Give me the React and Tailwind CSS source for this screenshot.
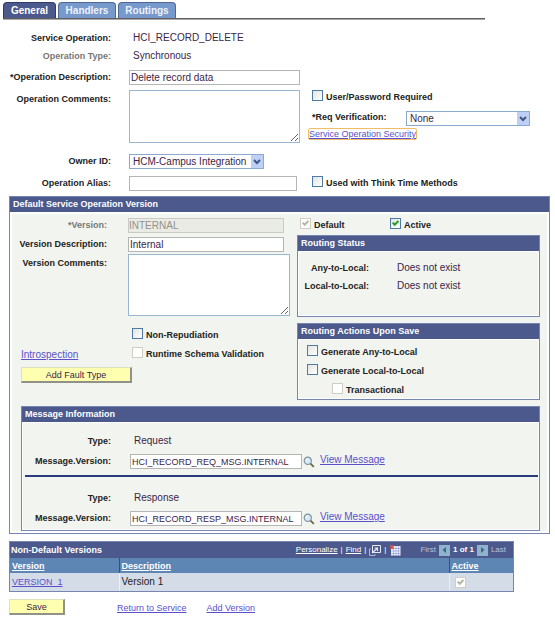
import React from "react";

const tabs = ["General", "Handlers", "Routings"];

const inputClass =
  "block h-[15px] w-full border border-[#b5b5b5] bg-white pl-px text-[#3b2447] outline-none";
const areaClass = "block w-full resize-y border border-[#9ab6d3] bg-white outline-none";
const linkClass = "text-[#5a50cc] underline";
const labelClass = "text-right text-[9px] font-bold whitespace-nowrap";
const buttonClass =
  "block h-4 border border-t-[#e0dfc0] border-r-2 border-b-2 border-l-[#e0dfc0] border-r-[#929187] border-b-[#929187] bg-[#ffffb0] text-[9px] leading-3 text-[#3b2447]";

const Checkbox = ({ label, checked = false, disabled = false, bare = false }) => (
  <label className="flex items-start gap-[3px] text-[9px] leading-3 font-bold">
    <span className="relative block h-[11px] w-[11px] shrink-0">
      <input
        type="checkbox"
        defaultChecked={checked}
        disabled={disabled}
        aria-label={bare ? label : undefined}
        className="peer block h-[11px] w-[11px] appearance-none border border-[#4d7ba6] bg-linear-to-br from-[#e4e4e0] to-white disabled:border-[#d0cec4] disabled:from-white"
      />
      <svg
        viewBox="0 0 11 11"
        className="pointer-events-none absolute inset-0 hidden text-[#21a121] peer-checked:block peer-disabled:text-[#b5b5a8]"
      >
        <path d="M2.7 4.6 L4.7 6.7 L8.4 3" fill="none" stroke="currentColor" strokeWidth="2" />
      </svg>
    </span>
    {!bare && <span className="pt-px">{label}</span>}
  </label>
);

const Select = ({ id, value }) => (
  <div className="relative">
    <select
      id={id}
      defaultValue={value}
      className="block h-[15px] w-full appearance-none border border-[#8aabcf] bg-white pl-[3px] text-[#3b2447] outline-none"
    >
      <option>{value}</option>
    </select>
    <span className="pointer-events-none absolute top-px right-px flex h-[13px] w-3 items-center justify-center bg-[#bfd0f7]">
      <svg viewBox="0 0 8 6" className="h-[6px] w-2">
        <path d="M1 1 L4 4 L7 1" fill="none" stroke="#3f5584" strokeWidth="2" />
      </svg>
    </span>
  </div>
);

const Panel = ({ title, className = "", children }) => (
  <section className={`border border-[#7785b3] bg-[#f2f4ef] ${className}`}>
    <h2 className="h-[15px] bg-[#4b598c] pl-[3px] text-[9px] leading-[15px] font-bold text-white">
      {title}
    </h2>
    <div className="border border-white">{children}</div>
  </section>
);

const SearchIcon = () => (
  <svg viewBox="0 0 12 12" className="h-3 w-3">
    <circle cx="4.8" cy="4.8" r="3.6" fill="#d5ecf8" stroke="#8293a0" strokeWidth="1.2" />
    <path d="M3 4.6 A2 2 0 0 1 5 2.8" fill="none" stroke="#fff" />
    <path d="M7.6 7.6 L10.8 10.8" stroke="#6d6341" strokeWidth="1.8" />
  </svg>
);

const MessageRow = ({ id, type, value, className }) => (
  <div className={`grid grid-cols-[88px_172px_1fr] gap-x-[19px] ${className}`}>
    <span className={`${labelClass} leading-[18px]`}>Type:</span>
    <span className="pl-1 leading-[18px] text-[#3b2447]">{type}</span>
    <span />
    <label htmlFor={id} className={`${labelClass} pt-1 leading-[15px]`}>
      Message.Version:
    </label>
    <div className="pt-1">
      <input id={id} defaultValue={value} className={`${inputClass} text-[9px]`} />
    </div>
    <div className="-ml-[18px] flex items-start gap-[5px] pt-1">
      <button type="button" aria-label={`Look up ${type}`} className="pt-[2px]">
        <SearchIcon />
      </button>
      <a href="#" className={linkClass}>
        View Message
      </a>
    </div>
  </div>
);

const PopOutIcon = () => (
  <svg viewBox="0 0 12 11" className="h-[11px] w-3">
    <path d="M3.5 .5 H11.5 V7.5 H3.5 Z" fill="#4b598c" stroke="#e5e9f4" />
    <path d="M2 4 H.5 V10.5 H6 V9" fill="none" stroke="#aeb8d4" />
    <path d="M3 8 L8 3.5 M5.5 3 H8.5 V6" fill="none" stroke="#e5e9f4" strokeWidth="1.2" />
  </svg>
);

const GridIcon = () => (
  <svg viewBox="0 0 12 11" className="h-[11px] w-3">
    <rect x="2" y="1" width="9.5" height="9.5" fill="#f4f5ff" />
    <path d="M2 3.5 H11.5 M2 6 H11.5 M2 8.5 H11.5 M4.5 1 V10.5 M7 1 V10.5 M9.5 1 V10.5" stroke="#8791d6" strokeWidth=".6" />
    <path d="M0 0 L2 .6 L4.6 0 L4.6 4 L.8 4 L2 2.6 Z" fill="#dc5940" />
  </svg>
);

const PageArrow = ({ label, d }) => (
  <button type="button" aria-label={label} className="h-[11px] w-[11px] bg-[#8fb3cd]">
    <svg viewBox="0 0 11 11">
      <path d={d} fill="#3f6589" />
    </svg>
  </button>
);

const App = () => {
  return (
    <div className="min-h-screen bg-white pt-[2px] font-['Liberation_Sans',Arial,sans-serif] text-[10px] leading-3 text-[#222222]">
      <nav className="mx-[3px] flex max-w-[482px] gap-[2px] border-b border-[#5f5f5f] shadow-[0_1px_0_#a8a8a8]">
        {tabs.map((tab, i) => (
          <button
            key={tab}
            type="button"
            className={`h-4 rounded-t-[4px] border border-b-0 text-[10px] leading-[15px] font-bold ${
              i === 0
                ? "w-[53px] border-[#303b6b] bg-[#4b598c] text-white"
                : "w-[58px] border-[#4c6798] bg-[#7799cb] text-[#eef3fb]"
            }`}
          >
            {tab}
          </button>
        ))}
      </nav>

      <form className="mr-[5px] ml-[9px]" onSubmit={(e) => e.preventDefault()}>
        <div className="grid grid-cols-[102px_171px_1fr] gap-x-[18px] pt-[10px]">
          <span className={`${labelClass} leading-[18px]`}>Service Operation:</span>
          <span className="pl-1 leading-[18px] text-[#3b2447]">HCI_RECORD_DELETE</span>
          <span />
          <span className={`${labelClass} leading-[18px] text-[#777777]`}>Operation Type:</span>
          <span className="pl-1 leading-[18px] text-[#3b2447]">Synchronous</span>
          <span />

          <label htmlFor="desc" className={`${labelClass} pt-[5px] leading-[15px]`}>
            *Operation Description:
          </label>
          <div className="py-[5px]">
            <input id="desc" defaultValue="Delete record data" className={inputClass} />
          </div>
          <span />

          <label htmlFor="comments" className={`${labelClass} pt-[2px] leading-[15px]`}>
            Operation Comments:
          </label>
          <textarea id="comments" className={`${areaClass} h-[53px]`} />
          <div className="-ml-[6px]">
            <Checkbox label="User/Password Required" />
            <div className="grid grid-cols-[90px_124px] items-start gap-x-1 pt-[8px]">
              <label htmlFor="verification" className="text-[9px] font-bold">
                *Req Verification:
              </label>
              <Select id="verification" value="None" />
            </div>
            <a
              href="#"
              className={`${linkClass} mt-[2px] -ml-[4px] inline-block rounded-[2px] border border-[#eebd64] text-[9px] leading-[10px]`}
            >
              Service Operation Security
            </a>
          </div>

          <label htmlFor="owner" className={`${labelClass} pt-[11px] leading-[15px]`}>
            Owner ID:
          </label>
          <div className="w-[135px] pt-[11px]">
            <Select id="owner" value="HCM-Campus Integration" />
          </div>
          <span />

          <label htmlFor="alias" className={`${labelClass} pt-[7px] leading-[15px]`}>
            Operation Alias:
          </label>
          <div className="pt-[7px] pr-[3px]">
            <input id="alias" defaultValue="" className={inputClass} />
          </div>
          <div className="-ml-[6px] pt-[7px]">
            <Checkbox label="Used with Think Time Methods" />
          </div>
        </div>

        <Panel title="Default Service Operation Version" className="mt-[5px]">
          <div className="border border-white pr-[7px] pl-[9px]">
            <div className="flex gap-[7px]">
              <div className="w-[269px] shrink-0 pt-[4px]">
                <div className="grid grid-cols-[86px_162px] gap-x-[21px]">
                  <label htmlFor="version" className={`${labelClass} leading-[15px] text-[#777777]`}>
                    *Version:
                  </label>
                  <input
                    id="version"
                    disabled
                    defaultValue="INTERNAL"
                    className="block h-[15px] w-[156px] border border-[#cbcac4] bg-[#ebebe5] text-[#92928a]"
                  />
                  <label htmlFor="vdesc" className={`${labelClass} -ml-2 pt-1 leading-[15px]`}>
                    Version Description:
                  </label>
                  <div className="w-[156px] pt-[4px]">
                    <input id="vdesc" defaultValue="Internal" className={inputClass} />
                  </div>
                  <label htmlFor="vcomments" className={`${labelClass} pt-[4px] leading-[15px]`}>
                    Version Comments:
                  </label>
                  <div className="pt-[2px]">
                    <textarea id="vcomments" className={`${areaClass} h-[62px]`} />
                  </div>
                </div>
                <div className="pt-[12px] pl-[111px]">
                  <Checkbox label="Non-Repudiation" />
                </div>
                <div className="grid grid-cols-[111px_1fr] pt-[6px]">
                  <a href="#" className={`${linkClass} pt-[2px]`}>
                    Introspection
                  </a>
                  <Checkbox label="Runtime Schema Validation" disabled />
                </div>
                <button type="button" className={`${buttonClass} mt-[6px] w-[111px]`}>
                  Add Fault Type
                </button>
              </div>

              <div className="min-w-0 flex-1 pt-[4px]">
                <div className="grid grid-cols-[90px_1fr] pl-[3px]">
                  <Checkbox label="Default" checked disabled />
                  <Checkbox label="Active" checked />
                </div>
                <Panel title="Routing Status" className="mt-[4px]">
                  <div className="grid h-[63px] grid-cols-[70px_1fr] content-start gap-x-[28px] pt-[7px] leading-[18px]">
                    <span className={labelClass}>Any-to-Local:</span>
                    <span className="text-[#3b2447]">Does not exist</span>
                    <span className={labelClass}>Local-to-Local:</span>
                    <span className="text-[#3b2447]">Does not exist</span>
                  </div>
                </Panel>
                <Panel title="Routing Actions Upon Save" className="mt-[6px]">
                  <div className="h-[58px] space-y-[6px] pt-[5px] pl-2">
                    <Checkbox label="Generate Any-to-Local" />
                    <Checkbox label="Generate Local-to-Local" />
                    <div className="pl-[25px]">
                      <Checkbox label="Transactional" disabled />
                    </div>
                  </div>
                </Panel>
              </div>
            </div>

            <Panel title="Message Information" className="mt-[6px]">
              <MessageRow
                id="request"
                type="Request"
                value="HCI_RECORD_REQ_MSG.INTERNAL"
                className="pt-[9px] pb-[6px]"
              />
              <hr className="ml-[2px] border-t-2 border-[#2b3c7c]" />
              <MessageRow
                id="response"
                type="Response"
                value="HCI_RECORD_RESP_MSG.INTERNAL"
                className="pt-[12px] pb-[3px]"
              />
            </Panel>
          </div>
        </Panel>

        <section className="mt-[7px] max-w-[505px] border border-[#7785b3] bg-[#d4dce8]">
          <div className="flex h-4 items-center bg-[#4b598c] pl-px text-white">
            <h2 className="flex-1 text-[9px] font-bold">Non-Default Versions</h2>
            <div className="flex items-center gap-[3px] pr-[7px] text-[8px]">
              <a href="#" className="underline">Personalize</a>
              <span>|</span>
              <a href="#" className="underline">Find</a>
              <span>|</span>
              <button type="button" aria-label="View all"><PopOutIcon /></button>
              <span>|</span>
              <button type="button" aria-label="Download"><GridIcon /></button>
              <span className="pl-4 text-[#bdc3d8]">First</span>
              <PageArrow label="Previous" d="M7 2 V8 L3.5 5 Z" />
              <span className="font-bold">1 of 1</span>
              <PageArrow label="Next" d="M4 2 V8 L7.5 5 Z" />
              <span className="text-[#bdc3d8]">Last</span>
            </div>
          </div>
          <table className="w-full table-fixed border-collapse text-left">
            <thead>
              <tr className="h-[15px] bg-[#5d86b5] text-[9px] text-white">
                <th className="w-[109px] border-r border-[#3b4d82] pl-[2px]"><a href="#" className="underline">Version</a></th>
                <th className="border-r border-[#3b4d82] pl-[2px]"><a href="#" className="underline">Description</a></th>
                <th className="w-[64px] pl-[2px]"><a href="#" className="underline">Active</a></th>
              </tr>
            </thead>
            <tbody>
              <tr className="h-[18px]">
                <td className="border-r border-[#edf1f7] pl-[2px] text-[9px]"><a href="#" className={linkClass}>VERSION_1</a></td>
                <td className="border-r border-[#edf1f7] pl-[2px]">Version 1</td>
                <td className="pl-[5px]"><Checkbox label="Active version" checked disabled bare /></td>
              </tr>
            </tbody>
          </table>
        </section>

        <div className="flex items-center pt-[7px] pb-1 text-[9px]">
          <button type="button" className={`${buttonClass} w-[56px]`}>
            Save
          </button>
          <a href="#" className={`${linkClass} ml-[52px] pt-[2px]`}>Return to Service</a>
          <a href="#" className={`${linkClass} ml-5 pt-[2px]`}>Add Version</a>
        </div>
      </form>
    </div>
  );
};

export default App;
